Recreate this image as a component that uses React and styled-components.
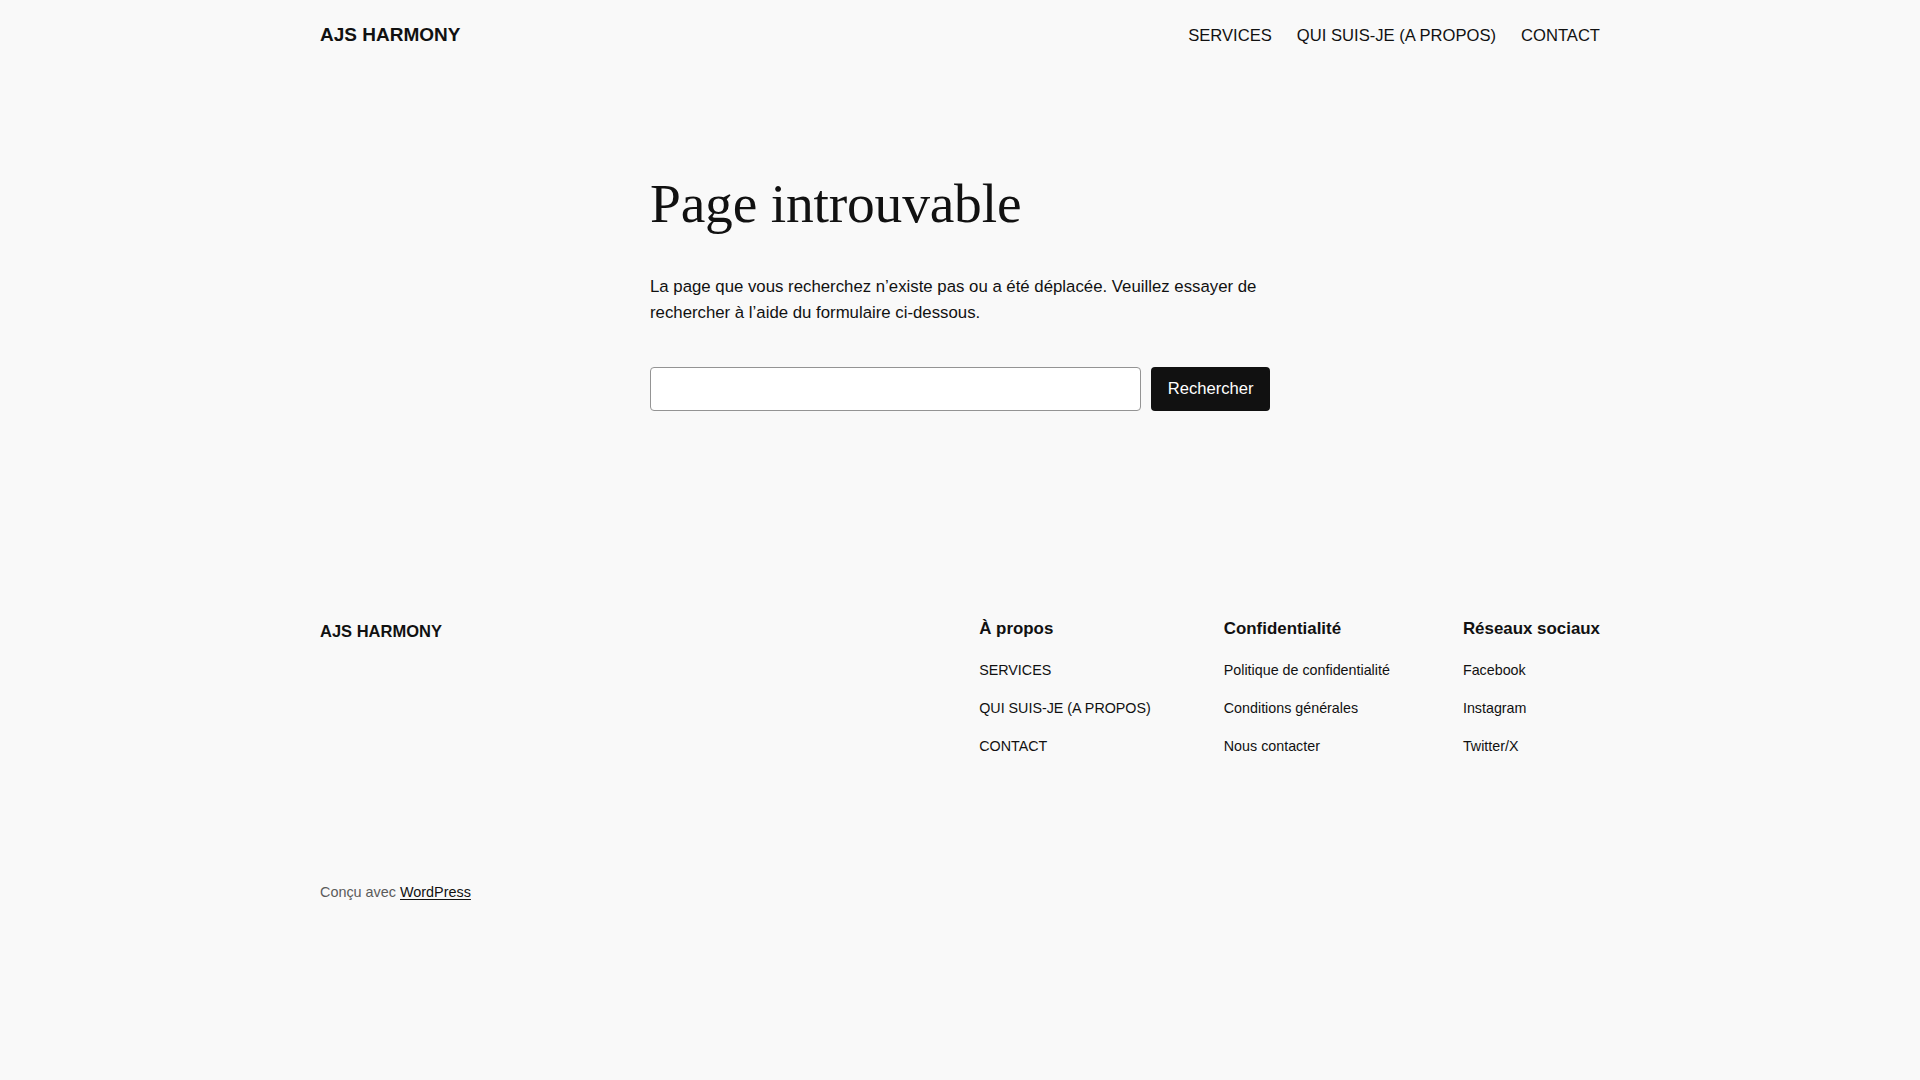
import React from "react";
import styled, { createGlobalStyle } from "styled-components";

const GlobalStyle = createGlobalStyle`
  html, body {
    margin: 0;
    padding: 0;
    background: #f9f9f9;
    color: #111111;
    font-family: "Liberation Sans", Arial, sans-serif;
  }
  a {
    color: inherit;
    text-decoration: none;
  }
`;

const Page = styled.div`
  min-height: 1080px;
  background: #f9f9f9;
`;

const Wide = styled.div`
  width: 1280px;
  margin: 0 auto;
`;

const Header = styled.header`
  display: flex;
  justify-content: space-between;
  align-items: baseline;
  padding-top: 22px;
`;

const SiteTitle = styled.a`
  font-size: ${(p) => p.$size || 19}px;
  line-height: 26px;
  font-weight: 700;
  color: #111111;
`;

const Nav = styled.nav`
  display: flex;
  gap: 25px;
`;

const NavItem = styled.a`
  font-size: 16.6px;
  line-height: 26px;
  color: #111111;
`;

const Main = styled.main`
  width: 620px;
  margin: 0 auto;
  padding-top: 122px;
`;

const Title = styled.h1`
  margin: 0;
  font-family: "Liberation Serif", "Times New Roman", serif;
  font-weight: 400;
  font-size: 55.5px;
  line-height: 66px;
  letter-spacing: -0.2px;
`;

const Text = styled.p`
  margin: 37px 0 0;
  font-size: 16.8px;
  line-height: 25.8px;
`;

const SearchForm = styled.form`
  display: flex;
  gap: 10.5px;
  margin-top: 41px;
`;

const SearchInput = styled.input`
  flex: 1;
  height: 44px;
  box-sizing: border-box;
  border: 1px solid #949494;
  border-radius: 4px;
  background: #ffffff;
  padding: 0 12px;
  font-size: 16.6px;
  font-family: inherit;
`;

const SearchButton = styled.button`
  height: 44px;
  padding: 0 16.5px;
  border: none;
  border-radius: 4px;
  background: #111111;
  color: #ffffff;
  font-family: inherit;
  font-size: 16.6px;
  cursor: pointer;
`;

const Footer = styled.footer`
  margin-top: 205px;
`;

const FooterTop = styled.div`
  display: flex;
  justify-content: space-between;
  align-items: flex-start;
`;

const FooterBrand = styled.div`
  padding-top: 2px;
`;

const Columns = styled.div`
  display: flex;
  gap: 73px;
`;

const Column = styled.div`
  display: flex;
  flex-direction: column;
`;

const ColumnTitle = styled.h2`
  margin: 0 0 17.7px;
  font-size: 16.9px;
  line-height: 25.8px;
  font-weight: 700;
`;

const LinkList = styled.div`
  display: flex;
  flex-direction: column;
  gap: 16px;
`;

const FooterLink = styled.a`
  font-size: 14.3px;
  line-height: 22px;
  color: #111111;
`;

const Credit = styled.p`
  margin: 124px 0 0;
  font-size: 14.4px;
  line-height: 22px;
  color: #5b5b5b;

  a {
    color: #111111;
    text-decoration: underline;
    text-underline-offset: 2px;
  }
`;

const columns = [
  { title: "À propos", links: ["SERVICES", "QUI SUIS-JE (A PROPOS)", "CONTACT"] },
  {
    title: "Confidentialité",
    links: ["Politique de confidentialité", "Conditions générales", "Nous contacter"],
  },
  { title: "Réseaux sociaux", links: ["Facebook", "Instagram", "Twitter/X"] },
];

export default function App() {
  return (
    <Page>
      <GlobalStyle />
      <Wide>
        <Header>
          <SiteTitle href="#">AJS HARMONY</SiteTitle>
          <Nav>
            <NavItem href="#">SERVICES</NavItem>
            <NavItem href="#">QUI SUIS-JE (A PROPOS)</NavItem>
            <NavItem href="#">CONTACT</NavItem>
          </Nav>
        </Header>
      </Wide>

      <Main>
        <Title>Page introuvable</Title>
        <Text>
          La page que vous recherchez n’existe pas ou a été déplacée. Veuillez
          essayer de rechercher à l’aide du formulaire ci-dessous.
        </Text>
        <SearchForm onSubmit={(e) => e.preventDefault()}>
          <SearchInput type="search" aria-label="Rechercher" />
          <SearchButton type="submit">Rechercher</SearchButton>
        </SearchForm>
      </Main>

      <Wide>
        <Footer>
          <FooterTop>
            <FooterBrand>
              <SiteTitle href="#" $size={16.5}>
                AJS HARMONY
              </SiteTitle>
            </FooterBrand>
            <Columns>
              {columns.map((col) => (
                <Column key={col.title}>
                  <ColumnTitle>{col.title}</ColumnTitle>
                  <LinkList>
                    {col.links.map((l) => (
                      <FooterLink href="#" key={l}>
                        {l}
                      </FooterLink>
                    ))}
                  </LinkList>
                </Column>
              ))}
            </Columns>
          </FooterTop>
          <Credit>
            Conçu avec <a href="#">WordPress</a>
          </Credit>
        </Footer>
      </Wide>
    </Page>
  );
}
